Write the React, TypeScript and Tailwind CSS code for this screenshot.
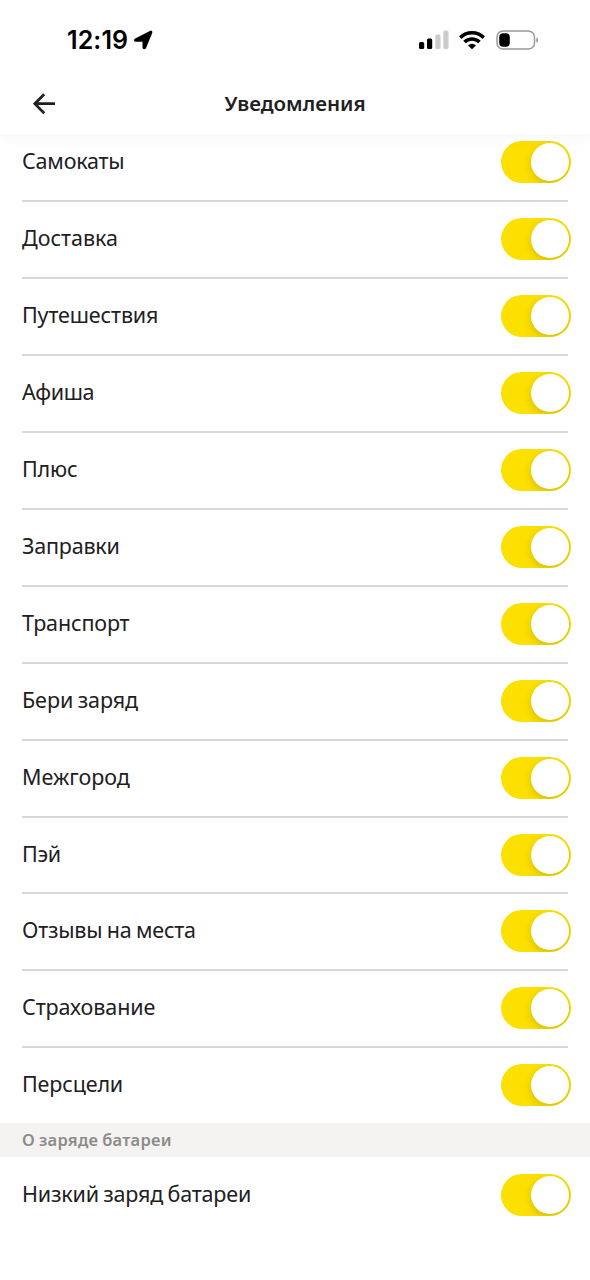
const services: { label: string; tracking: string }[] = [
  { label: "Самокаты", tracking: "tracking-[-0.2px]" },
  { label: "Доставка", tracking: "tracking-normal" },
  { label: "Путешествия", tracking: "tracking-[-0.14px]" },
  { label: "Афиша", tracking: "tracking-[-0.35px]" },
  { label: "Плюс", tracking: "tracking-[-0.2px]" },
  { label: "Заправки", tracking: "tracking-[-0.2px]" },
  { label: "Транспорт", tracking: "tracking-[-0.15px]" },
  { label: "Бери заряд", tracking: "tracking-[-0.08px]" },
  { label: "Межгород", tracking: "tracking-normal" },
  { label: "Пэй", tracking: "tracking-[-0.3px]" },
  { label: "Отзывы на места", tracking: "tracking-[-0.2px]" },
  { label: "Страхование", tracking: "tracking-[-0.07px]" },
  { label: "Персцели", tracking: "tracking-[-0.15px]" },
];

function Toggle() {
  return (
    <button
      type="button"
      role="switch"
      aria-checked="true"
      className="flex h-[42px] w-[70px] shrink-0 items-center justify-end overflow-hidden rounded-full bg-[#fce000] pr-[2px]"
    >
      <span className="size-[38px] rounded-full bg-white shadow-[0_3px_8px_rgba(0,0,0,0.16)]" />
    </button>
  );
}

function StatusBar() {
  return (
    <div className="flex h-[80px] items-center justify-between pr-[51px] pl-[67px]">
      <div className="flex items-center gap-[4px]">
        <span className="w-[62px] font-['Inter',sans-serif] text-[25px] leading-[30px] font-semibold tracking-[0.1px] text-black">
          12:19
        </span>
        <svg width="21" height="21" viewBox="0 0 21 21" className="text-black">
          <path
            d="M18.300 2.500 12.100 17.600c-.4 1-1.600.9-1.600-.2V10.800H3c-1.200 0-1.300-1-.300-1.500L17.300 1.800c.9-.4 1.300-.1 1 .7Z"
            fill="currentColor"
            stroke="currentColor"
            strokeWidth="2"
            strokeLinejoin="round"
          />
        </svg>
      </div>
      <div className="flex items-center">
        <svg width="31" height="20" viewBox="0 0 31 20">
          <rect x="0" y="12" width="5.200" height="7" rx="1.500" fill="#000" />
          <rect x="8" y="8.500" width="5.200" height="10.500" rx="1.500" fill="#000" />
          <rect x="16.300" y="4.500" width="5.200" height="14.500" rx="1.500" fill="#ccc" />
          <rect x="24.300" y="0.500" width="5.200" height="18.500" rx="1.500" fill="#ccc" />
        </svg>
        <svg width="26" height="20" viewBox="0 0 26 20" className="ml-[9px]">
          <g fill="none" stroke="#000" strokeWidth="3.600">
            <path d="M1.300 7.600a16.700 16.700 0 0 1 23.400 0" />
            <path d="M5.500 12a10.700 10.700 0 0 1 15 0" />
          </g>
          <path d="M13 19.300 9 15.500a5.700 5.700 0 0 1 8 0Z" fill="#000" />
        </svg>
        <svg width="43" height="20" viewBox="0 0 43 20" className="ml-[11px]">
          <rect x="1" y="0.900" width="37.500" height="18.200" rx="6" fill="none" stroke="#999" strokeWidth="1.500" />
          <rect x="3.200" y="3.200" width="10.600" height="13.600" rx="4" fill="#000" />
          <path d="M40.300 7.200c2.400.9 2.400 4.700 0 5.600Z" fill="#999" />
        </svg>
      </div>
    </div>
  );
}

export default function App() {
  return (
    <div className="flex h-[1280px] w-[590px] flex-col overflow-hidden bg-white font-['Noto_Sans',sans-serif] text-[#21201f]">
      <header className="relative z-10 h-[134px] shrink-0 bg-white shadow-[0_0_20px_rgba(0,0,0,0.05)]">
        <StatusBar />
        <div className="grid h-[48px] grid-cols-[80px_1fr_80px] items-center">
          <button type="button" aria-label="Назад" className="pl-[33px]">
            <svg width="23" height="22" viewBox="0 0 23 22" fill="none" stroke="#21201f" strokeWidth="2.700">
              <path d="M11.200 1.200 1.800 10.700l9.400 9.500M2 10.700h20" />
            </svg>
          </button>
          <h1 className="pb-[2px] text-center text-[20.500px] leading-[30px] font-semibold">Уведомления</h1>
        </div>
      </header>

      <ul className="-mt-[8.600px] h-[997.600px] shrink-0">
        {services.map(({ label, tracking }) => (
          <li key={label} className="group flex h-[76.920px] items-start justify-between pt-[16px] pr-[19px] pl-[22px]">
            <div className="flex h-full grow flex-col justify-between">
              <span className={`text-[21.500px] leading-[39px] whitespace-nowrap [word-spacing:-1px] ${tracking}`}>
                {label}
              </span>
              <div className="-mr-[67px] h-[2px] bg-[#d8d8d8] group-last:hidden" />
            </div>
            <Toggle />
          </li>
        ))}
      </ul>

      <h2 className="h-[34px] shrink-0 bg-[#f4f3f2] pl-[22px] text-[16.500px] leading-[33px] font-semibold tracking-[0.25px] text-[#8c8b89] [word-spacing:-0.500px]">
        О заряде батареи
      </h2>
      <div className="flex items-start justify-between pt-[17px] pr-[19px] pl-[22px]">
        <span className="text-[21.500px] leading-[39px] tracking-[-0.18px] whitespace-nowrap [word-spacing:-1px]">
          Низкий заряд батареи
        </span>
        <Toggle />
      </div>
    </div>
  );
}
